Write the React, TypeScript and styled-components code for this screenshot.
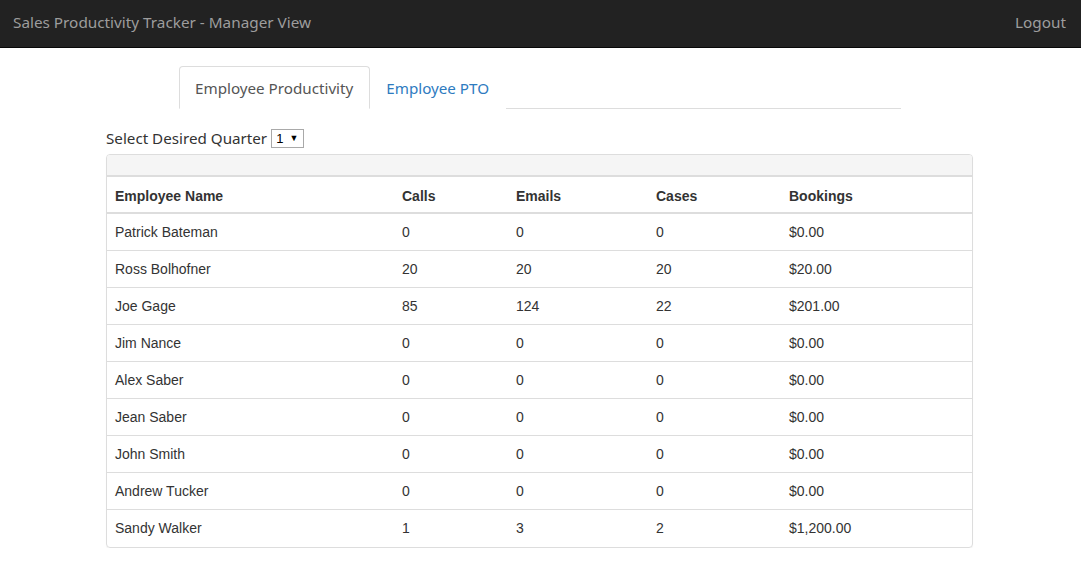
import React from "react";
import styled, { createGlobalStyle } from "styled-components";

const Global = createGlobalStyle`
  html, body { margin: 0; padding: 0; background: #fff; }
  body { font-family: "Liberation Sans", Arial, sans-serif; font-size: 14px; color: #333; }
  * { box-sizing: border-box; }
`;

const display = `"Noto Sans", "Open Sans", sans-serif`;

const Navbar = styled.header`
  height: 48px;
  background: #222;
  border-bottom: 1px solid #080808;
  display: flex;
  align-items: center;
  justify-content: space-between;
  padding: 0 15px 3px 13px;
`;

const Brand = styled.div`
  font-family: ${display};
  font-size: 15.3px;
  color: #9d9d9d;
`;

const NavLink = styled.a`
  font-family: ${display};
  font-size: 15.3px;
  color: #9d9d9d;
  text-decoration: none;
`;

const Page = styled.div`
  padding: 18px 0 0 106px;
`;

const Main = styled.main`
  width: 867px;
  display: flex;
  flex-direction: column;
`;

const Tabs = styled.ul`
  list-style: none;
  margin: 0 72px 0 73px;
  padding: 0;
  display: flex;
  border-bottom: 1px solid #ddd;
`;

const Tab = styled.li<{ $active?: boolean }>`
  margin-bottom: -1px;
  padding: 10px 16px 10px 15px;
  height: 43px;
  line-height: 22px;
  font-family: ${display};
  font-size: 15.2px;
  color: ${(p) => (p.$active ? "#555" : "#2e7bbf")};
  background: #fff;
  border: 1px solid ${(p) => (p.$active ? "#ddd" : "transparent")};
  border-bottom-color: ${(p) => (p.$active ? "#fff" : "transparent")};
  border-radius: 4px 4px 0 0;
`;

const QuarterRow = styled.div`
  margin-top: 19px;
  display: flex;
  align-items: center;
  gap: 4px;
  font-family: ${display};
  font-size: 15.2px;
  color: #333;
  height: 20px;
`;

const Select = styled.span`
  display: inline-flex;
  align-items: center;
  gap: 6px;
  height: 19px;
  padding: 0 5px 0 4px;
  border: 1px solid #a9a9a9;
  font-family: "Liberation Sans", Arial, sans-serif;
  font-size: 13px;
  color: #000;
  background: #fff;
`;

const Caret = styled.span`
  font-size: 9px;
`;

const Panel = styled.section`
  margin-top: 6px;
  border: 1px solid #ddd;
  border-radius: 4px;
  box-shadow: 0 1px 1px rgba(0, 0, 0, 0.05);
  overflow: hidden;
`;

const PanelHeading = styled.div`
  height: 21px;
  background: #f5f5f5;
  border-bottom: 1px solid #ddd;
`;

const Table = styled.table`
  width: 100%;
  border-collapse: collapse;
  table-layout: fixed;
`;

const Th = styled.th<{ $w?: number }>`
  width: ${(p) => (p.$w ? `${p.$w}px` : "auto")};
  text-align: left;
  padding: 9px 8px 6px;
  line-height: 20px;
  font-weight: bold;
  border-top: 1px solid #ddd;
  border-bottom: 2px solid #ddd;
  height: 36px;
`;

const Td = styled.td`
  padding: 8px 8px;
  line-height: 20px;
  border-top: 1px solid #ddd;
  height: 37px;
`;

const rows: [string, string, string, string, string][] = [
  ["Patrick Bateman", "0", "0", "0", "$0.00"],
  ["Ross Bolhofner", "20", "20", "20", "$20.00"],
  ["Joe Gage", "85", "124", "22", "$201.00"],
  ["Jim Nance", "0", "0", "0", "$0.00"],
  ["Alex Saber", "0", "0", "0", "$0.00"],
  ["Jean Saber", "0", "0", "0", "$0.00"],
  ["John Smith", "0", "0", "0", "$0.00"],
  ["Andrew Tucker", "0", "0", "0", "$0.00"],
  ["Sandy Walker", "1", "3", "2", "$1,200.00"],
];

export default function App() {
  return (
    <>
      <Global />
      <Navbar>
        <Brand>Sales Productivity Tracker - Manager View</Brand>
        <NavLink href="#">Logout</NavLink>
      </Navbar>
      <Page>
        <Main>
          <Tabs>
            <Tab $active>Employee Productivity</Tab>
            <Tab>Employee PTO</Tab>
          </Tabs>
          <QuarterRow>
            Select Desired Quarter
            <Select>
              1 <Caret>▼</Caret>
            </Select>
          </QuarterRow>
          <Panel>
            <PanelHeading />
            <Table>
              <thead>
                <tr>
                  <Th $w={287}>Employee Name</Th>
                  <Th $w={114}>Calls</Th>
                  <Th $w={140}>Emails</Th>
                  <Th $w={133}>Cases</Th>
                  <Th>Bookings</Th>
                </tr>
              </thead>
              <tbody>
                {rows.map((r) => (
                  <tr key={r[0]}>
                    {r.map((c, i) => (
                      <Td key={i}>{c}</Td>
                    ))}
                  </tr>
                ))}
              </tbody>
            </Table>
          </Panel>
        </Main>
      </Page>
    </>
  );
}
